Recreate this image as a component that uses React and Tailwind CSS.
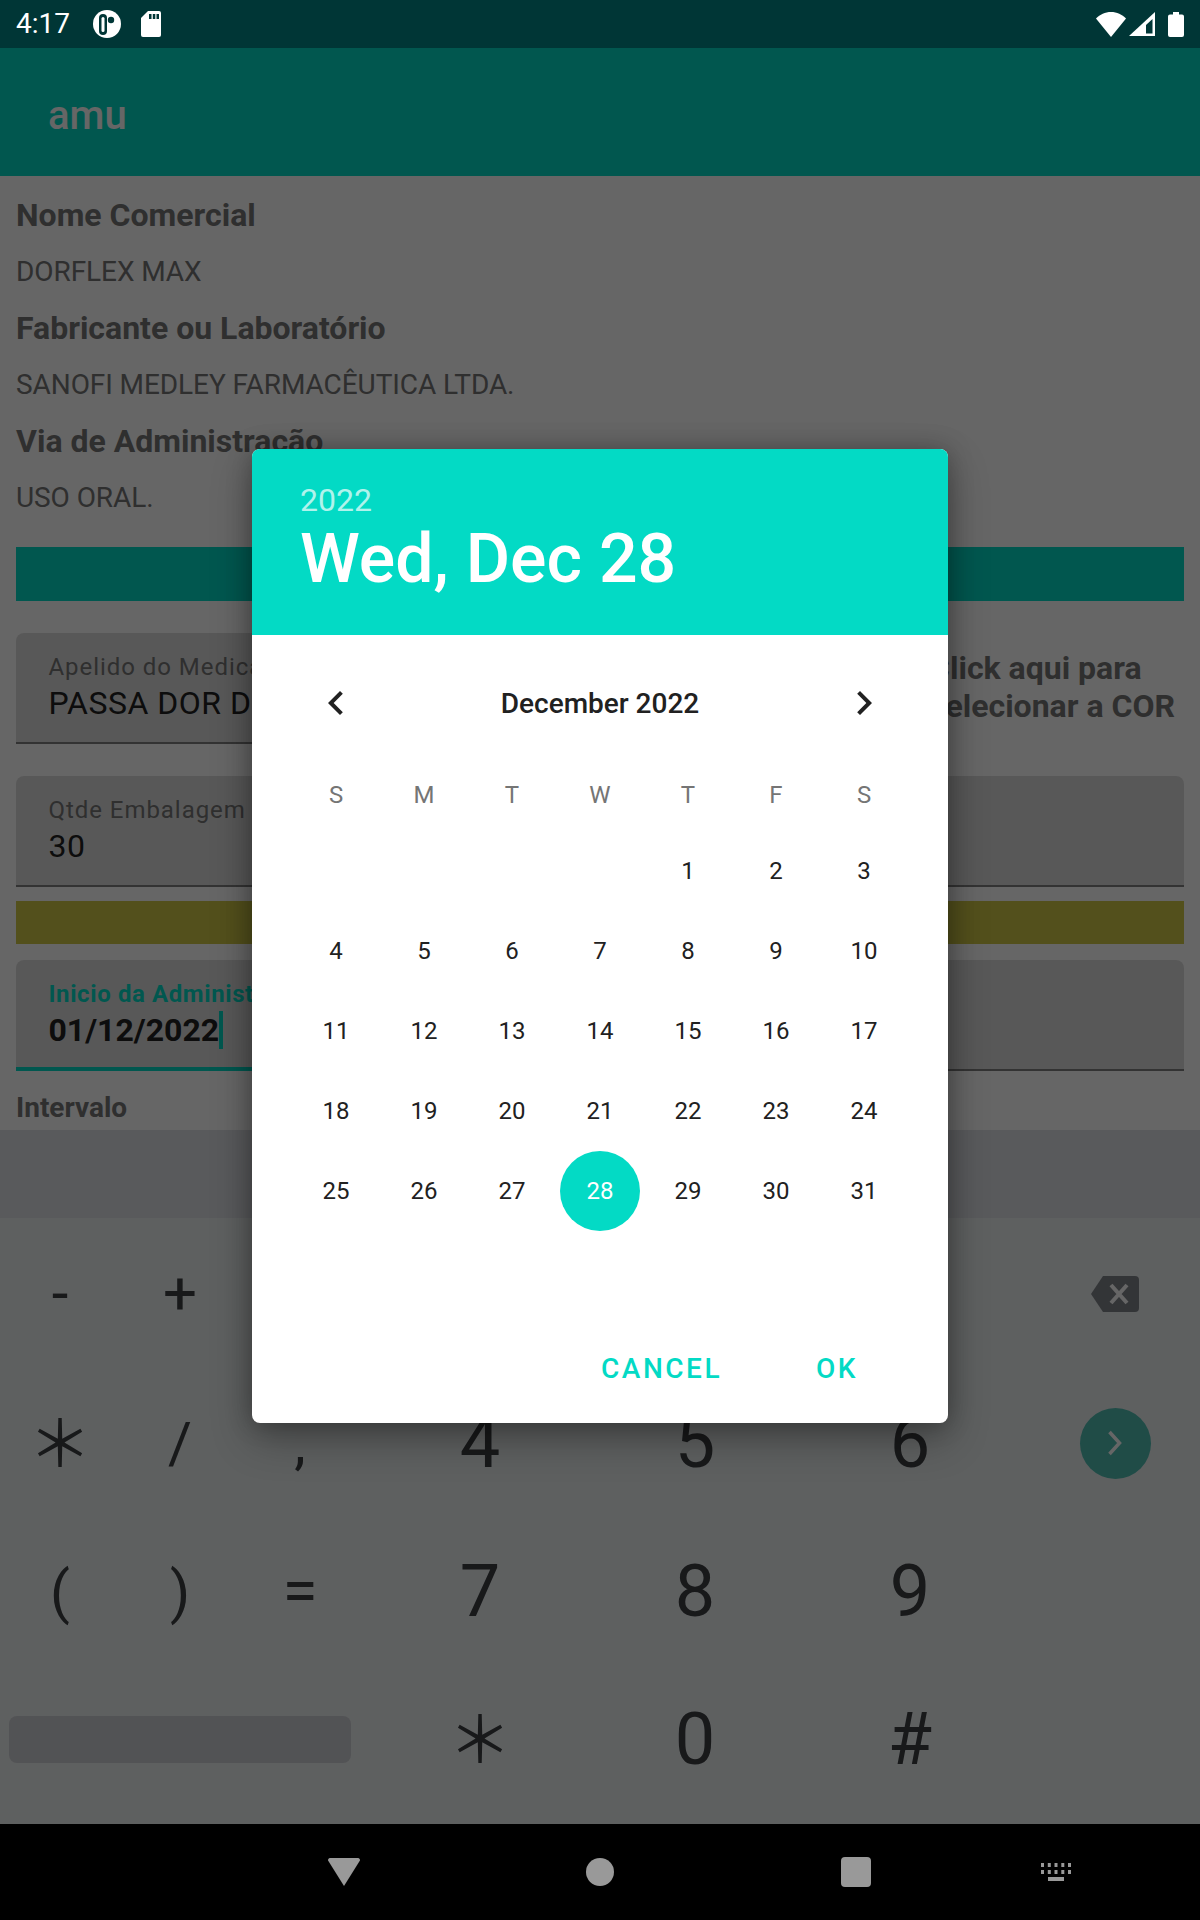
import React from 'react';

const weeks = [
  ['', '', '', '', 1, 2, 3],
  [4, 5, 6, 7, 8, 9, 10],
  [11, 12, 13, 14, 15, 16, 17],
  [18, 19, 20, 21, 22, 23, 24],
  [25, 26, 27, 28, 29, 30, 31],
];

const StatusBar = () => (
  <div className="relative z-30 h-12 bg-[#003636] flex items-center pl-4 pr-4 text-white">
    <span className="w-[77px] text-[28px] leading-none">4:17</span>
    <svg width="28" height="28" viewBox="0 0 28 28" className="mr-5">
      <circle cx="14" cy="14" r="14" fill="#fff" />
      <rect x="6" y="4" width="8" height="21" rx="4" fill="#003636" />
      <rect x="8.500" y="7" width="3" height="15" rx="1.500" fill="#fff" />
      <circle cx="18" cy="10" r="3.200" fill="#003636" />
    </svg>
    <svg width="20" height="26" viewBox="0 0 20 26">
      <path d="M7 0h11a2 2 0 0 1 2 2v22a2 2 0 0 1-2 2H2a2 2 0 0 1-2-2V7z" fill="#fff" />
      <path d="M8 3h2.500v5H8zM11.800 3h2.500v5h-2.500zM15.500 3H18v5h-2.500z" fill="#003636" />
    </svg>
    <div className="ml-auto flex items-center">
      <svg width="30" height="25" viewBox="0 0 30 25">
        <path d="M15 25 0 6.500C4 2.500 9 0 15 0s11 2.500 15 6.500z" fill="#fff" />
      </svg>
      <svg width="26" height="24" viewBox="0 0 26 24" className="ml-[3px]">
        <path d="M26 0v24H0z" fill="#fff" />
        <path d="M23.500 7v14.500H17V13z" fill="#003636" />
      </svg>
      <svg width="16" height="25" viewBox="0 0 16 25" className="ml-[13px]">
        <path d="M5 0h6v2.500h3a2 2 0 0 1 2 2V23a2 2 0 0 1-2 2H2a2 2 0 0 1-2-2V4.500a2 2 0 0 1 2-2h3z" fill="#fff" />
      </svg>
    </div>
  </div>
);

const Info = ({ title, value }) => (
  <>
    <div className="h-[56.500px] flex items-center text-[32px] font-bold text-[#757575] whitespace-nowrap">{title}</div>
    <div className="h-[56.500px] flex items-center text-[28px] tracking-[-0.08px] text-[#757575] whitespace-nowrap">{value}</div>
  </>
);

const Field = ({ label, value, focused = false, className = "" }) => (
  <div className={`h-[111px] bg-[#dddddd] rounded-t-lg pl-[32.500px] pt-[18px] overflow-hidden ${focused ? 'border-b-4 border-[#03dac5]' : 'border-b-2 border-[#808080]'} ${className}`}>
    <div className={`text-[24px] leading-[32px] whitespace-nowrap ${focused ? 'font-bold tracking-[0.6px] text-[#03dac5]' : 'tracking-[0.95px] text-[#757575]'}`}>{label}</div>
    <div className={`text-[32px] leading-[40px] text-[#212121] whitespace-nowrap flex items-center ${focused ? 'font-bold' : 'tracking-[0.5px]'}`}>
      {value}
      {focused && <span className="w-1 h-[38px] bg-[#03dac5]" />}
    </div>
  </div>
);

const Key = ({ children, className = "" }) => (
  <div className={`flex items-center justify-center text-[#3c4043] ${className}`}>{children}</div>
);

const Keyboard = () => (
  <div className="h-[694px] bg-[#eceff1] flex flex-col">
    <div className="h-[88px] bg-[#dfe1e5]" />
    <div className="flex-1 relative">
      <div className="grid grid-cols-[120px_120px_120px_240px_190px_240px_170px] grid-rows-[149px_150px_148px_147px] pt-[1px]">
        <Key className="text-[60px]">-</Key>
        <Key className="text-[60px]">+</Key>
        <Key />
        <Key />
        <Key />
        <Key />
        <Key>
          <svg width="48" height="36" viewBox="0 0 48 36">
            <path d="M12 0h32a4 4 0 0 1 4 4v28a4 4 0 0 1-4 4H12L0 18z" fill="#80868b" />
            <path d="M20 9l16 18M36 9 20 27" stroke="#fff" strokeWidth="4" fill="none" />
          </svg>
        </Key>

        <Key className="text-[64px] pb-[8px] font-['Noto_Sans_CJK_SC',sans-serif]">＊</Key>
        <Key className="text-[58px]">/</Key>
        <Key className="text-[58px]">,</Key>
        <Key className="text-[72px]">4</Key>
        <Key className="text-[72px]">5</Key>
        <Key className="text-[72px]">6</Key>
        <Key>
          <div className="w-[71px] h-[71px] rounded-full bg-[#50beb2] flex items-center justify-center">
            <svg width="36" height="36" viewBox="0 0 36 36">
              <path d="M12.500 7l10 11-10 11" stroke="#fff" strokeWidth="3.500" fill="none" />
            </svg>
          </div>
        </Key>

        <Key className="text-[58px]">(</Key>
        <Key className="text-[58px]">)</Key>
        <Key className="text-[64px]">=</Key>
        <Key className="text-[72px]">7</Key>
        <Key className="text-[72px]">8</Key>
        <Key className="text-[72px]">9</Key>
        <Key />

        <div className="col-span-3 flex items-center pl-[9px]">
          <div className="w-[342px] h-[47px] rounded-lg bg-[#cdd0d4]" />
        </div>
        <Key className="text-[64px] pb-[10px] font-['Noto_Sans_CJK_SC',sans-serif]">＊</Key>
        <Key className="text-[72px]">0</Key>
        <Key className="text-[72px]">#</Key>
        <Key />
      </div>
    </div>
  </div>
);

const DatePicker = () => (
  <div className="absolute z-20 left-[252px] top-[449px] w-[696px] h-[974px] rounded-lg bg-white overflow-hidden shadow-[0_16px_40px_rgba(0,0,0,0.3),0_0_24px_rgba(0,0,0,0.25)] flex flex-col">
    <div className="h-[186px] bg-[#03dac5] pl-[48px] pt-[31px] text-white">
      <div className="text-[32px] leading-[40px] text-white/70">2022</div>
      <div className="text-[68px] leading-[72px] font-medium mt-[3px]">Wed, Dec 28</div>
    </div>
    <div className="flex items-center justify-between h-[120px] px-[60px] pt-[16px] text-[#212121]">
      <svg width="48" height="48" viewBox="0 0 24 24" fill="#212121">
        <path d="M15.410 7.410 14 6l-6 6 6 6 1.410-1.410L10.830 12z" />
      </svg>
      <span className="text-[28px] font-medium mt-[1px]">December 2022</span>
      <svg width="48" height="48" viewBox="0 0 24 24" fill="#212121">
        <path d="M10 6 8.590 7.410 13.170 12l-4.580 4.590L10 18l6-6z" />
      </svg>
    </div>
    <div className="grid grid-cols-[repeat(7,88px)] justify-center">
      {['S', 'M', 'T', 'W', 'T', 'F', 'S'].map((d, i) => (
        <div key={i} className="h-[76px] pt-[4px] flex items-center justify-center text-[24px] text-[#757575]">{d}</div>
      ))}
      {weeks.flat().map((d, i) => (
        <div key={i} className="h-[80px] flex items-center justify-center text-[24px] text-[#212121]">
          {d === 28 ? (
            <span className="w-[80px] h-[80px] rounded-full bg-[#03dac5] text-white flex items-center justify-center">{d}</span>
          ) : d}
        </div>
      ))}
    </div>
    <div className="mt-auto h-[75px] flex items-start justify-end pr-[90px] gap-[94px] text-[28px] font-medium tracking-[2.500px] text-[#03dac5]">
      <span>CANCEL</span>
      <span>OK</span>
    </div>
  </div>
);

const NavBar = () => (
  <div className="relative z-30 h-24 bg-black flex items-center pl-[328px]">
    <svg width="32" height="28" viewBox="0 0 32 28">
      <path d="M2 0h28a2 2 0 0 1 1.800 2.800L16 28 .2 2.800A2 2 0 0 1 2 0z" fill="#999" />
    </svg>
    <div className="w-7 h-7 rounded-full bg-[#999] ml-[226px]" />
    <div className="w-[30px] h-[30px] rounded-sm bg-[#999] ml-[227px]" />
    <svg width="30" height="18" viewBox="0 0 30 18" className="ml-[170px]">
      <path d="M0 0h3v4H0zM6.800 0h3v4h-3zM13.500 0h3v4h-3zM20.300 0h3v4h-3zM27 0h3v4h-3zM0 7h3v4H0zM6.800 7h3v4h-3zM13.500 7h3v4h-3zM20.300 7h3v4h-3zM27 7h3v4h-3zM7 14h16v4H7z" fill="#999" />
    </svg>
  </div>
);

export default function App() {
  return (
    <div className="relative w-[1200px] h-[1920px] overflow-hidden bg-white font-['Roboto',sans-serif]">
      <StatusBar />
      <div className="h-32 bg-[#03dac5] flex items-center pl-12 pt-2 text-white text-[40px] font-medium">amu</div>
      <div className="h-[954px] overflow-hidden px-4 pt-[11px]">
        <Info title="Nome Comercial" value="DORFLEX MAX" />
        <Info title="Fabricante ou Laboratório" value="SANOFI MEDLEY FARMACÊUTICA LTDA." />
        <Info title="Via de Administração" value="USO ORAL." />
        <div className="h-[54px] mt-[21px] bg-[#03dac5]" />
        <div className="flex mt-8 justify-between items-center">
          <Field label="Apelido do Medicamento" value="PASSA DOR DE CABEÇA" className="w-[700px]" />
          <div className="text-[32px] leading-[38px] font-bold text-[#757575] w-[250px] mr-[5px] mt-[-4px]">Click aqui para selecionar a COR</div>
        </div>
        <Field label="Qtde Embalagem" value="30" className="mt-8" />
        <div className="h-[43px] mt-[14px] bg-[#cfc846]" />
        <div className="grid grid-cols-2 gap-4 mt-4">
          <Field label="Inicio da Administração" value="01/12/2022" focused />
          <Field label="" value="" />
        </div>
        <div className="text-[28px] font-bold text-[#757575] mt-[16px]">Intervalo</div>
      </div>
      <Keyboard />
      <NavBar />
      <div className="absolute inset-0 z-10 bg-black/60" />
      <DatePicker />
    </div>
  );
}
